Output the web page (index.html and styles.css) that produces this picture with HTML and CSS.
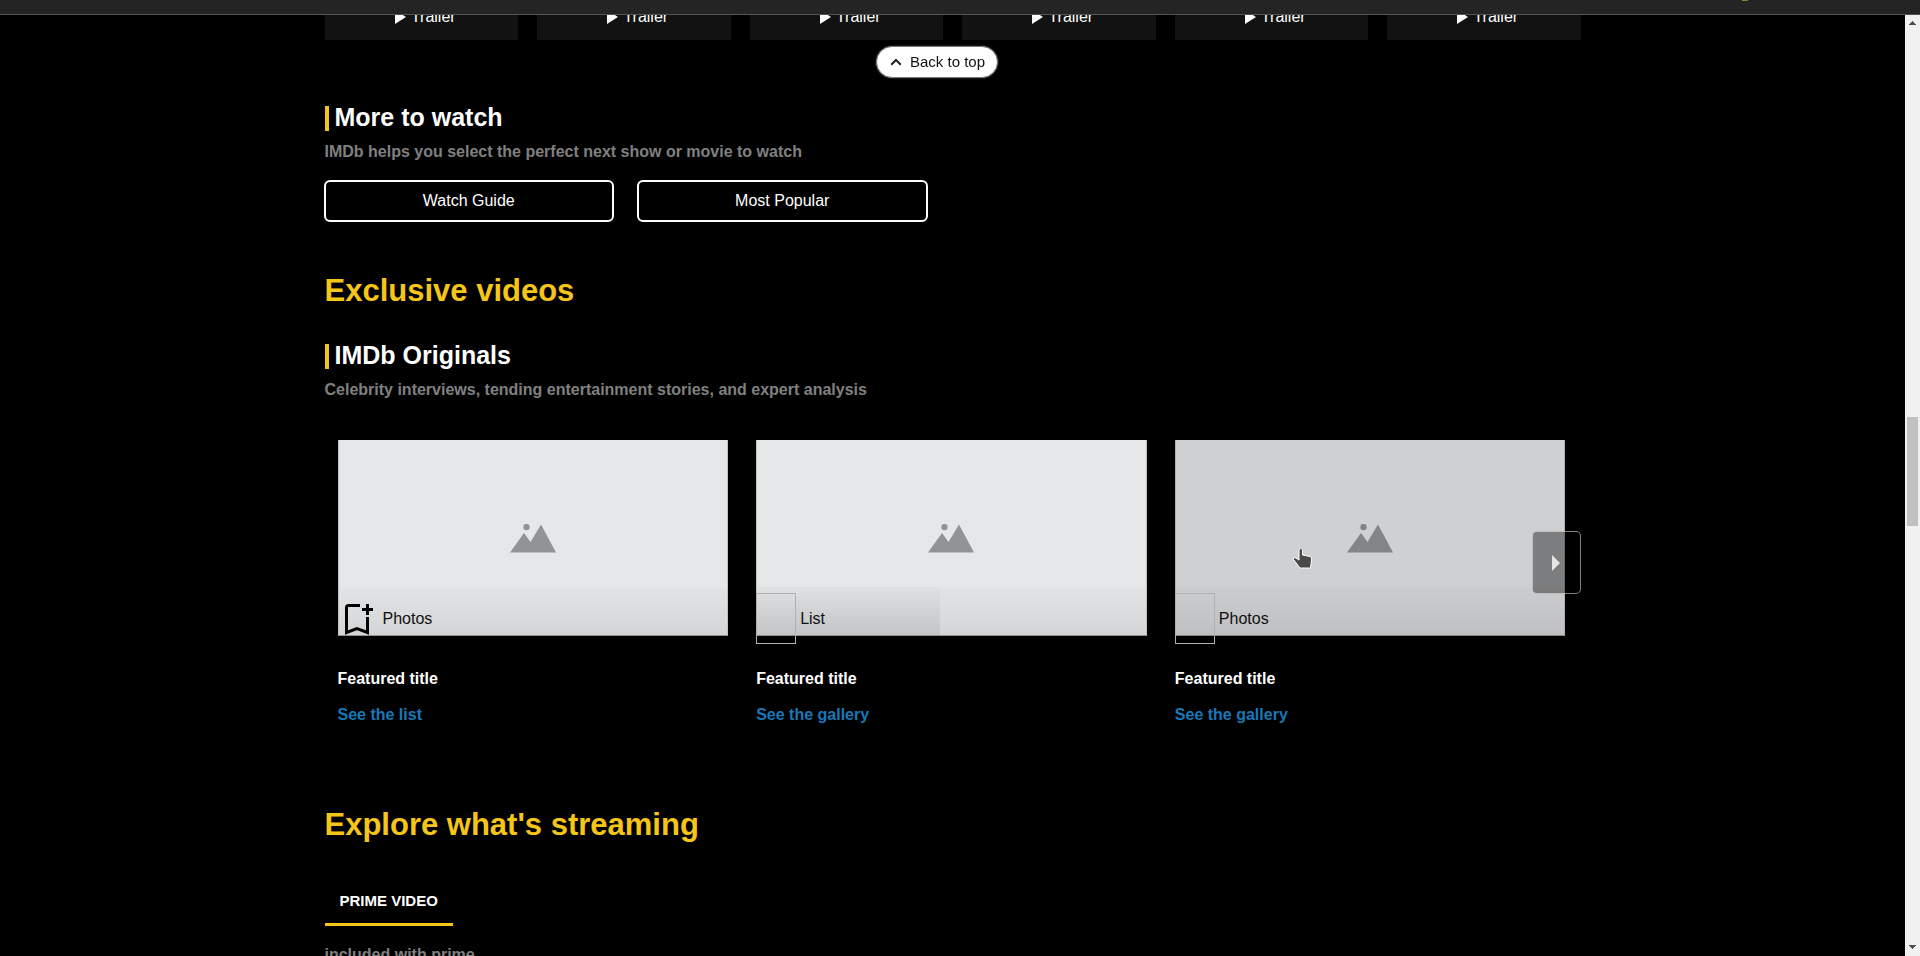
FILE: index.html
```html
<!DOCTYPE html>
<html lang="en">
<head>
<meta charset="utf-8">
<title>IMDb</title>
<link rel="stylesheet" href="styles.css">
</head>
<body>
<svg class="defs" aria-hidden="true">
  <symbol id="play" viewBox="0 0 24 24"><path d="M8 5v14l11-7z" fill="#fff"/></symbol>
  <symbol id="photo" viewBox="0 0 46 29"><path d="M0 28.500 14 9l6.500 9L31 .500 46 28.500z"/><circle cx="16.500" cy="3" r="3.200"/></symbol>
</svg>
<header class="topbar"><span class="topbar-mark"></span></header>
<div class="page">
  <main class="content">
    <div class="container">
      <div class="trailers">
        <button class="trailer"><svg><use href="#play"/></svg>Trailer</button>
        <button class="trailer"><svg><use href="#play"/></svg>Trailer</button>
        <button class="trailer"><svg><use href="#play"/></svg>Trailer</button>
        <button class="trailer"><svg><use href="#play"/></svg>Trailer</button>
        <button class="trailer"><svg><use href="#play"/></svg>Trailer</button>
        <button class="trailer"><svg><use href="#play"/></svg>Trailer</button>
      </div>

      <section class="more">
        <h3 class="heading">More to watch</h3>
        <p class="sub">IMDb helps you select the perfect next show or movie to watch</p>
        <div class="guide">
          <button class="outline">Watch Guide</button>
          <button class="outline">Most Popular</button>
        </div>
      </section>

      <section class="videos">
        <h2 class="title">Exclusive videos</h2>
        <h3 class="heading">IMDb Originals</h3>
        <p class="sub">Celebrity interviews, tending entertainment stories, and expert analysis</p>
        <div class="carousel">
          <article class="card">
            <div class="thumb">
              <svg class="photo"><use href="#photo"/></svg>
              <div class="caption caption-icon">
                <svg class="bookmark" viewBox="0 0 28 31"><path d="M15 1.500H3.500Q1.500 1.500 1.500 3.500V28.500L12 24.500 22.500 28.500V13" fill="none" stroke="#000" stroke-width="3"/><path d="M22.500 0v11M17 5.500h11" stroke="#000" stroke-width="3"/></svg>
                <span>Photos</span>
              </div>
            </div>
            <p class="name">Featured title</p>
            <a class="link" href="#">See the list</a>
          </article>
          <article class="card">
            <div class="thumb">
              <svg class="photo"><use href="#photo"/></svg>
              <div class="caption"><div class="shade"></div><span class="empty"></span><span>List</span></div>
            </div>
            <p class="name">Featured title</p>
            <a class="link" href="#">See the gallery</a>
          </article>
          <article class="card">
            <div class="thumb hovered">
              <svg class="photo"><use href="#photo"/></svg>
              <svg class="cursor" viewBox="0 0 22 24"><path d="M7.500 2C9 1 10.500 2 10.500 3.500V8L18 9.500Q20 10.500 19.500 13L18.500 21H8L1.500 12.500Q1 10.500 3 10.500L7 13V3z" fill="#4a4a4a" stroke="#fff"/></svg>
              <div class="caption"><span class="empty"></span><span>Photos</span></div>
            </div>
            <p class="name">Featured title</p>
            <a class="link" href="#">See the gallery</a>
          </article>
          <button class="next" aria-label="Next"><svg viewBox="0 0 8 16"><path d="M0 0 8 8 0 16z" fill="#fff" fill-opacity=".8"/></svg></button>
        </div>
      </section>

      <section class="streaming">
        <h2 class="title">Explore what's streaming</h2>
        <button class="tab">PRIME VIDEO</button>
        <p class="sub">included with prime</p>
      </section>
    </div>
  </main>
  <div class="scrollbar" aria-hidden="true">
    <svg viewBox="0 0 15 17"><path d="M7 6h1v1h1v1h1v1h1v1H4V9h1V8h1V7h1z"/></svg>
    <div class="thumb-bar"></div>
    <svg viewBox="0 0 15 17"><path d="M4 6h7v1h-1v1H9v1H8v1H7V9H6V8H5V7H4z"/></svg>
  </div>
</div>
<button class="to-top"><svg viewBox="0 0 12 8"><path d="M1.200 6.800 6 2l4.800 4.800" fill="none" stroke="#222" stroke-width="2"/></svg>Back to top</button>
</body>
</html>
```
FILE: styles.css
```css
* { box-sizing: border-box; }
body {
  margin: 0;
  background: #000;
  color: #fff;
  font: 16px/24px "Liberation Sans", Arial, sans-serif;
  overflow: hidden;
}
button { font: inherit; color: inherit; cursor: pointer; margin: 0; }
h2, h3, p { margin: 0; }
.defs { position: absolute; width: 0; height: 0; }

.topbar {
  position: fixed;
  inset: 0 0 auto 0;
  z-index: 5;
  height: 15px;
  background: #242424;
  border-bottom: 1px solid #545454;
}
.topbar-mark {
  position: absolute;
  right: 172px;
  top: 0;
  width: 6px;
  height: 1px;
  background: #63922a;
}

.page { display: flex; height: 100vh; }
.content { flex: 1; min-width: 0; overflow: hidden; }
.container { max-width: 1280px; margin: 0 auto; padding: 0 12px; }

.trailers { display: grid; grid-template-columns: repeat(6, 1fr); gap: 19px; }
.trailer {
  display: flex;
  align-items: center;
  justify-content: center;
  padding: 5px 0 11px;
  border: 0;
  background: #121212;
}
.trailer svg { width: 24px; height: 24px; }

.heading {
  border-left: 4px solid #f5c518;
  padding: 0 0 2px 6px;
  font-size: 25px;
  line-height: 23px;
}
.sub { margin-top: 9px; color: #808080; font-weight: 700; }
.title { color: #f5c518; font-size: 31px; line-height: 36px; }

.more { margin-top: 66px; }
.guide {
  display: grid;
  grid-template-columns: 1fr 1fr;
  gap: 23px;
  max-width: 604px;
  margin: 16px 0 0 -1px;
}
.outline {
  height: 42px;
  padding: 0;
  border: 2px solid #fff;
  border-radius: 6px;
  background: transparent;
}

.videos { margin-top: 51px; }
.videos .heading { margin-top: 35px; }

.carousel {
  position: relative;
  display: grid;
  grid-template-columns: repeat(3, 1fr);
  gap: 28px;
  margin-top: 38px;
  padding: 0 15px 0 13px;
}
.thumb {
  position: relative;
  display: flex;
  align-items: center;
  justify-content: center;
  height: 196px;
  padding-top: 2px;
  border: solid #c0c0c0;
  border-width: 0 1px 1px;
  border-bottom-color: #8e908f;
  background: #e6e7e9;
}
.thumb.hovered { background: #cfd0d2; border-color: #b2b2b2; border-bottom-color: #858585; }
.photo { width: 46px; height: 29px; fill: #929396; }
.hovered .photo { fill: #838487; }
.caption {
  position: absolute;
  inset: auto 0 0 0;
  display: flex;
  align-items: center;
  gap: 4px;
  height: 48px;
  padding-top: 16px;
  color: #111;
  background: linear-gradient(rgba(0, 0, 0, .015), rgba(0, 0, 0, .08));
}
.caption span { position: relative; }
.caption-icon { padding-left: 6px; gap: 10px; }
.bookmark { width: 28px; height: 31px; }
.shade {
  position: absolute;
  inset: 0 auto 0 0;
  width: 183px;
  background: linear-gradient(rgba(0, 0, 0, .01), rgba(0, 0, 0, .08));
}
.empty {
  align-self: flex-start;
  flex: none;
  width: 40px;
  height: 51px;
  margin: -10px 0 0 -1px;
  border: 1px solid #b0b0b0;
}
.cursor {
  position: absolute;
  left: 30%;
  top: 55%;
  width: 22px;
  height: 24px;
}
.name { margin-top: 31px; font-weight: 700; }
.link {
  display: inline-block;
  margin-top: 12px;
  color: #1878b9;
  font-weight: 700;
  text-decoration: none;
}
.next {
  position: absolute;
  right: 0;
  top: 91px;
  display: flex;
  align-items: center;
  justify-content: center;
  width: 49px;
  height: 63px;
  padding: 0;
  border: 1px solid rgba(255, 255, 255, .5);
  border-radius: 5px;
  background: rgba(0, 0, 0, .4);
}
.next svg { width: 8px; height: 16px; }

.streaming { margin-top: 80px; }
.tab {
  display: block;
  margin-top: 38px;
  padding: 8px 15px 10px;
  border: 0;
  border-bottom: 3px solid #f5c518;
  background: none;
  font-size: 15px;
  font-weight: 700;
}
.streaming .sub { margin-top: 17px; }

.scrollbar {
  display: flex;
  flex-direction: column;
  width: 15px;
  padding-top: 15px;
  background: #f1f1f1;
}
.scrollbar svg { flex: none; width: 15px; height: 17px; fill: #505050; }
.thumb-bar { flex: none; height: 109px; margin: 385px 2px auto; background: #c1c1c1; }

.to-top {
  position: fixed;
  left: 50%;
  top: 46px;
  z-index: 4;
  display: flex;
  align-items: center;
  gap: 8px;
  height: 32px;
  margin-left: -84px;
  padding: 0 12px 0 13px;
  border: 1px solid #777;
  border-radius: 16px;
  background: #fff;
  box-shadow: 0 0 2px #555;
  color: #111;
  font-size: 15px;
}
.to-top svg { width: 12px; height: 8px; }
```
